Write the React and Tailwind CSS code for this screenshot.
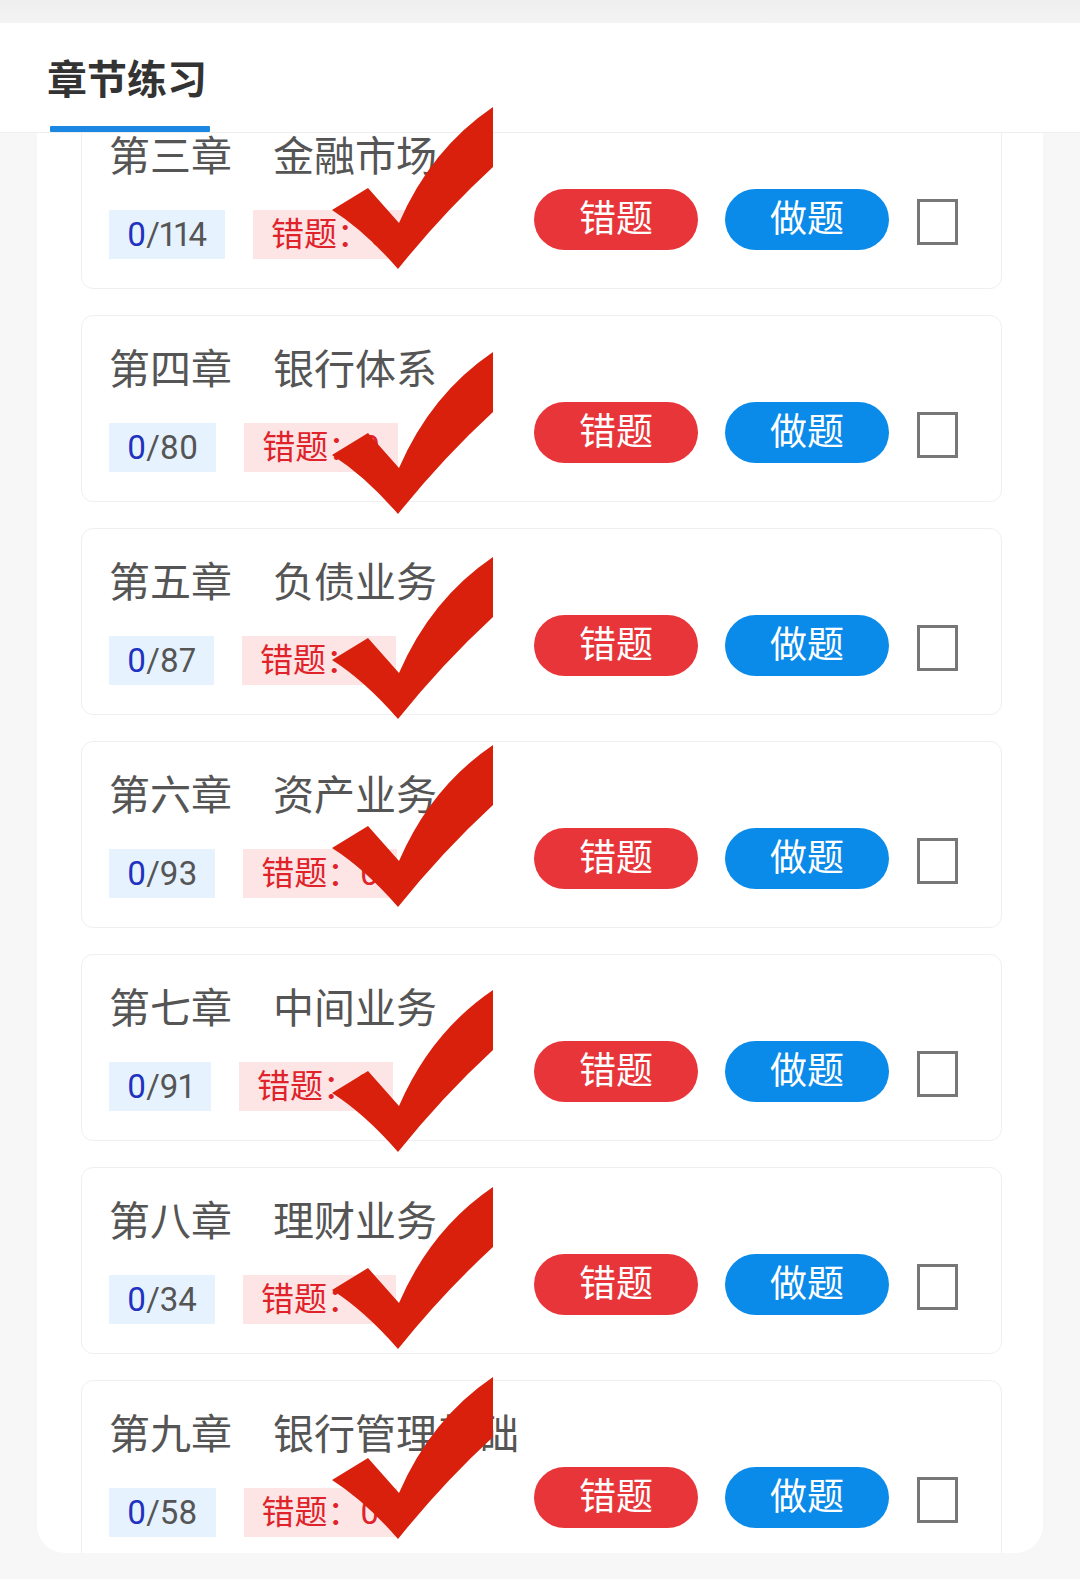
import React from "react";

const chapters = [
  { title: "第三章　金融市场", total: "114" },
  { title: "第四章　银行体系", total: "80" },
  { title: "第五章　负债业务", total: "87" },
  { title: "第六章　资产业务", total: "93" },
  { title: "第七章　中间业务", total: "91" },
  { title: "第八章　理财业务", total: "34" },
  { title: "第九章　银行管理基础", total: "58" },
];

const checks = [
  "top-[107px]",
  "top-[352px]",
  "top-[557px]",
  "top-[745px]",
  "top-[990px]",
  "top-[1187px]",
  "top-[1377px]",
];

function Check({ cls }) {
  return (
    <svg
      className={`absolute left-[331px] z-20 w-[163px] h-[163px] ${cls}`}
      viewBox="0 0 163 163"
    >
      <path
        d="M162 0 L162 60 Q112 106 67 162 Q34 124 1 103 L37 81 L68 116 Q100 42 162 0 Z"
        fill="#d8200c"
      />
    </svg>
  );
}

function Card({ title, total }) {
  return (
    <div className="w-[921px] h-[187px] mb-[26px] shrink-0 border border-[#efefef] rounded-[12px] bg-white flex pl-[27px] pt-[30px]">
      <div className="w-[425px] shrink-0 flex flex-col">
        <div className="h-[48px] leading-[48px] text-[41px] text-[#555555] whitespace-nowrap">
          {title}
        </div>
        <div className="mt-[29px] flex gap-[28px]">
          <div className="h-[49px] leading-[49px] px-[18px] bg-[#e6f2fe] text-[33px] proportional-nums">
            <span className="text-[#1f33c0]">0</span>
            <span className="text-[#555555]">/{total}</span>
          </div>
          <div className="h-[49px] leading-[49px] px-[18px] bg-[#fde5e5] text-[33px] text-[#e0222a]">
            错题：0
          </div>
        </div>
      </div>
      <div className="mt-[56px] flex items-start h-[61px]">
        <div className="w-[164px] h-[61px] rounded-full bg-[#e8353a] text-white text-[37px] leading-[61px] text-center">
          错题
        </div>
        <div className="ml-[27px] w-[164px] h-[61px] rounded-full bg-[#0b8be9] text-white text-[37px] leading-[61px] text-center">
          做题
        </div>
        <div className="ml-[28px] mt-[10px] w-[41px] h-[46px] border-[3px] border-[#777777] bg-white"></div>
      </div>
    </div>
  );
}

export default function App() {
  return (
    <div
      className="relative w-[1080px] h-[1579px] overflow-hidden bg-[#f7f7f8]"
      style={{ fontFamily: 'Roboto, "Noto Sans CJK SC", sans-serif' }}
    >
      <div className="h-[23px] bg-gradient-to-b from-[#eeeeee] to-[#f4f4f4]"></div>
      <div className="relative z-10 h-[110px] bg-white border-b border-[#eeeeee] flex flex-col">
        <div className="pl-[47px] pt-[34px] h-[82px] leading-[48px] text-[40px] font-bold text-[#333333]">
          章节练习
        </div>
        <div className="ml-[50px] mt-[21px] w-[160px] h-[6px] bg-[#1a88e2] rounded-[1px]"></div>
      </div>
      <div className="ml-[37px] w-[1006px] h-[1420px] overflow-hidden rounded-b-[28px] bg-white">
        <div className="pl-[44px] -mt-[31px] flex flex-col">
          {chapters.map((c) => (
            <Card key={c.title} title={c.title} total={c.total} />
          ))}
        </div>
      </div>
      {checks.map((c) => (
        <Check key={c} cls={c} />
      ))}
    </div>
  );
}
